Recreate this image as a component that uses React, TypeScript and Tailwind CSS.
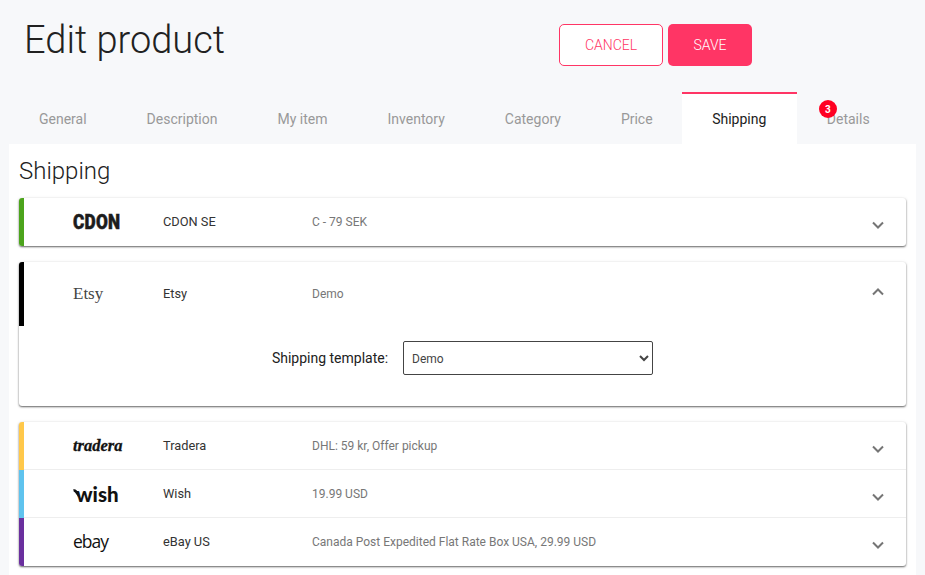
const roboto = { fontFamily: "Roboto, sans-serif" };

function Chevron({ up }: { up?: boolean }) {
  return (
    <svg width="14" height="9" viewBox="0 0 14 9" fill="none" className={up ? "-mt-[5px]" : "mt-[6px]"}>
      <path d={up ? "M2 7.5 L7 2.5 L12 7.5" : "M2 1.5 L7 6.5 L12 1.5"} stroke="#757575" strokeWidth="2" />
    </svg>
  );
}

function Logo({ name }: { name: string }) {
  if (name === "cdon")
    return <span className="inline-block origin-left scale-x-[0.86] text-[20px] leading-none font-black tracking-[0.3px] text-[#1c1c1c] [font-family:Roboto,sans-serif] [-webkit-text-stroke:0.5px_#1c1c1c]">CDON</span>;
  if (name === "etsy")
    return <span className="-mt-[2px] text-[17px] leading-none text-[#444] [font-family:'Liberation_Serif',serif]">Etsy</span>;
  if (name === "tradera")
    return <span className="text-[16.5px] leading-none font-bold italic text-[#111] [font-family:'Liberation_Serif',serif] [-webkit-text-stroke:0.3px_#111]">tradera</span>;
  if (name === "wish")
    return (
      <span className="inline-flex items-center">
        <svg width="6" height="10" viewBox="0 0 6 10" fill="none" className="-mt-[1px] shrink-0">
          <path d="M0.5 1.5 C2.5 1 3.5 3 6 7" stroke="#111" strokeWidth="2.6" />
        </svg>
        <span className="-ml-[3px] text-[20.5px] leading-none font-black text-[#111] [font-family:Lato,sans-serif]">wish</span>
      </span>
    );
  return <span className="text-[17.5px] leading-none tracking-[-1px] text-[#111] [font-family:'Open_Sans',sans-serif]">ebay</span>;
}

function Row({
  color, logo, name, desc, up, tall,
}: { color: string; logo: string; name: string; desc: string; up?: boolean; tall?: boolean }) {
  return (
    <div className={`flex items-center border-l-[5px] ${color} ${tall ? "h-[64px]" : "h-[48px]"}`}>
      <div className="w-[49px] shrink-0" />
      <div className="flex w-[90px] shrink-0 items-center"><Logo name={logo} /></div>
      <div className="w-[149px] shrink-0 text-[12.8px] text-[#333]">{name}</div>
      <div className="flex-1 text-[12px] text-[#777]">{desc}</div>
      <div className="flex w-[56px] justify-center"><Chevron up={up} /></div>
    </div>
  );
}

const cardCls = "rounded-[3px] bg-white overflow-hidden shadow-[0_1px_2px_rgba(0,0,0,0.6),0_0_4px_rgba(0,0,0,0.05)]";

export default function App() {
  const tabs = ["General", "Description", "My item", "Inventory", "Category", "Price"];
  return (
    <div style={roboto} className="h-[575px] w-[925px] overflow-hidden bg-[#f7f8fa]">
      <div className="flex h-[92px]">
        <h1 className="w-[559px] shrink-0 pl-[24px] pt-[15px] text-[38px] leading-[50px] font-light text-[#212121]">Edit product</h1>
        <div className="flex gap-[5px] pt-[24px]">
          <button className="h-[42px] w-[104px] rounded-[5px] border border-[#ff3565] bg-white text-[14px] font-light text-[#ff3565]">CANCEL</button>
          <button className="h-[42px] w-[84px] rounded-[5px] bg-[#ff3565] text-[14px] font-light text-white">SAVE</button>
        </div>
      </div>
      <div className="flex h-[52px] pl-[9px]">
        {tabs.map((t) => (
          <div key={t} className="flex items-center px-[30px] pt-[2px] text-[14px] text-[#999]">{t}</div>
        ))}
        <div className="-ml-[1px] flex items-center border-t-2 border-[#ff3565] bg-white px-[30.5px] text-[14px] text-[#212121]">Shipping</div>
        <div className="relative flex items-center px-[30px] pt-[2px] text-[14px] text-[#999]">
          Details
          <span className="absolute left-[22px] top-[8px] flex h-[18px] w-[18px] items-center justify-center rounded-full bg-[#ff0022] text-[10px] font-bold text-white">3</span>
        </div>
      </div>
      <div className="ml-[9px] h-[431px] w-[907px] bg-white px-[10px]">
        <h2 className="pt-[11px] text-[24px] leading-[32px] font-light text-[#212121]">Shipping</h2>
        <div className="mt-[11px] flex flex-col gap-[16px]">
          <div className={cardCls}>
            <Row color="border-[#4ca41c]" logo="cdon" name="CDON SE" desc="C - 79 SEK" />
          </div>
          <div className={cardCls}>
            <Row color="border-black" logo="etsy" name="Etsy" desc="Demo" up tall />
            <div className="flex h-[80px] items-start justify-center pt-[15px]">
              <span className="mr-[15px] mt-[8px] text-[14px] leading-[18px] text-[#212121]">Shipping template:</span>
              <select className="h-[34px] w-[250px] rounded-[2px] border border-[#444] bg-white pl-[4px] pt-[1px] text-[12px] text-[#444]">
                <option>Demo</option>
              </select>
            </div>
          </div>
          <div className={cardCls}>
            <Row color="border-[#ffc84a]" logo="tradera" name="Tradera" desc="DHL: 59 kr, Offer pickup" />
            <div className="relative -mt-px ml-[5px] h-px bg-[#eee]" />
            <Row color="border-[#5fc3ee]" logo="wish" name="Wish" desc="19.99 USD" />
            <div className="relative -mt-px ml-[5px] h-px bg-[#eee]" />
            <Row color="border-[#6a2f9e]" logo="ebay" name="eBay US" desc="Canada Post Expedited Flat Rate Box USA, 29.99 USD" />
          </div>
        </div>
      </div>
    </div>
  );
}
